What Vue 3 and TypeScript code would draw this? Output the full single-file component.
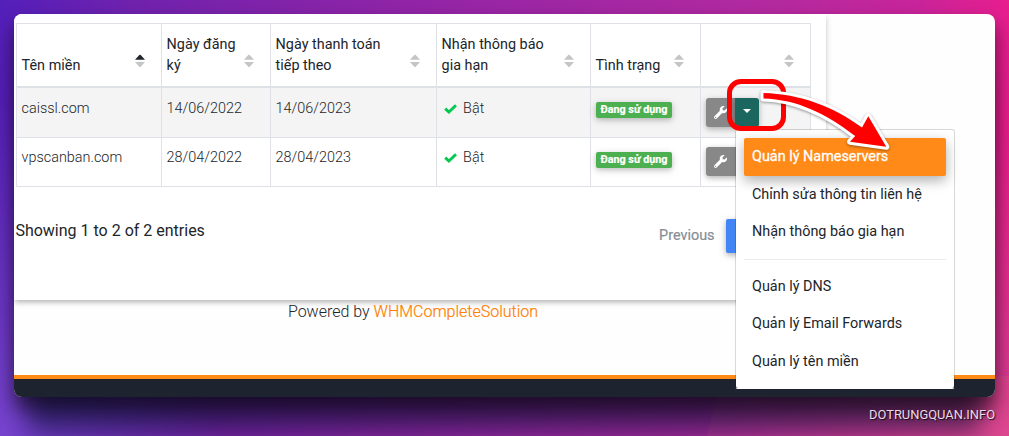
<script setup lang="ts">
interface Column {
  label: string
  sort: 'asc' | 'none'
}

interface Domain {
  name: string
  registered: string
  due: string
  open: boolean
}

const columns: Column[] = [
  { label: 'Tên miền', sort: 'asc' },
  { label: 'Ngày đăng ký', sort: 'none' },
  { label: 'Ngày thanh toán tiếp theo', sort: 'none' },
  { label: 'Nhận thông báo gia hạn', sort: 'none' },
  { label: 'Tình trạng', sort: 'none' },
  { label: '', sort: 'none' },
]

const domains: Domain[] = [
  { name: 'caissl.com', registered: '14/06/2022', due: '14/06/2023', open: true },
  { name: 'vpscanban.com', registered: '28/04/2022', due: '28/04/2023', open: false },
]

const menuGroups: string[][] = [
  ['Quản lý Nameservers', 'Chỉnh sửa thông tin liên hệ', 'Nhận thông báo gia hạn'],
  ['Quản lý DNS', 'Quản lý Email Forwards', 'Quản lý tên miền'],
]
const activeItem = menuGroups[0][0]
</script>

<template>
  <div class="backdrop">
    <div class="window">
      <main class="page">
        <section class="card">
          <table class="domains">
            <colgroup>
              <col class="c-name" /><col class="c-reg" /><col class="c-due" />
              <col class="c-notify" /><col class="c-status" /><col class="c-actions" />
            </colgroup>
            <thead>
              <tr>
                <th v-for="(column, i) in columns" :key="i">
                  <div class="head">
                    <span>{{ column.label }}</span>
                    <svg class="sort" :class="column.sort" width="10" height="14" viewBox="0 0 10 14">
                      <path class="up" d="M0 5.7 L4.3 1.1 Q5 .5 5.7 1.1 L10 5.7Z" />
                      <path class="down" d="M0 8 H10 L5.7 12.7 Q5 13.3 4.3 12.7Z" />
                    </svg>
                  </div>
                </th>
              </tr>
            </thead>
            <tbody>
              <tr v-for="domain in domains" :key="domain.name">
                <td>{{ domain.name }}</td>
                <td>{{ domain.registered }}</td>
                <td>{{ domain.due }}</td>
                <td>
                  <span class="notify">
                    <svg width="13" height="10" viewBox="0 0 13 10">
                      <path d="M1.2 4.6 L4.9 8 L12 1.2" fill="none" stroke="#05c851" stroke-width="2.9" />
                    </svg>
                    Bật
                  </span>
                </td>
                <td class="status"><span class="badge">Đang sử dụng</span></td>
                <td class="actions">
                  <div class="group">
                    <button class="tool" type="button">
                      <svg width="13" height="13" viewBox="0 0 512 512">
                        <path fill="#fff" d="M507.73 109.1c-2.24-9.03-13.54-12.09-20.12-5.51l-74.36 74.36-67.88-11.31-11.31-67.88 74.36-74.36c6.62-6.62 3.43-17.9-5.66-20.16-47.38-11.74-99.55.91-136.58 37.93-39.64 39.64-50.55 97.1-34.05 147.2L18.74 402.76c-24.99 24.99-24.99 65.51 0 90.5 24.99 24.99 65.51 24.99 90.5 0l213.21-213.21c50.12 16.71 107.47 5.68 147.37-34.22 37.07-37.07 49.7-89.32 37.91-136.73zM64 472c-13.25 0-24-10.75-24-24 0-13.26 10.75-24 24-24s24 10.74 24 24c0 13.25-10.75 24-24 24z" />
                      </svg>
                    </button>
                    <button v-if="domain.open" class="toggle" type="button"><i></i></button>
                  </div>
                </td>
              </tr>
            </tbody>
          </table>
          <div class="summary">
            <span class="entries">Showing 1 to 2 of 2 entries</span>
            <span class="previous">Previous</span>
            <span class="current"></span>
          </div>
        </section>
        <p class="powered">Powered by <a>WHMCompleteSolution</a></p>
      </main>
      <footer></footer>
    </div>

    <nav class="menu">
      <template v-for="(group, g) in menuGroups" :key="g">
        <hr v-if="g > 0" />
        <a v-for="item in group" :key="item" :class="{ active: item === activeItem }">{{ item }}</a>
      </template>
    </nav>

    <div class="ring"></div>
    <svg class="arrow" width="145" height="80" viewBox="755 80 145 80">
      <path d="M763.5 92.9 C800 94 833 106 862 127.6 L868.3 116.2 L886.3 146.8 L850 141.8 L855.2 136 C826 113.5 797 99.5 763.5 98.5Z" fill="#fff" stroke="#fff" stroke-width="6" stroke-linejoin="round" />
      <path d="M763.5 92.9 C800 94 833 106 862 127.6 L868.3 116.2 L886.3 146.8 L850 141.8 L855.2 136 C826 113.5 797 99.5 763.5 98.5Z" fill="#f00" />
    </svg>
    <div class="credit">DOTRUNGQUAN.INFO</div>
  </div>
</template>

<style>
html,
body {
  margin: 0;
  overflow: hidden;
}
</style>

<style scoped>
.backdrop {
  position: relative;
  box-sizing: border-box;
  width: 1009px;
  height: 436px;
  padding: 14px 14px 0;
  overflow: hidden;
  font-family: Roboto, "Noto Sans", sans-serif;
  color: #212529;
  background:
    linear-gradient(104deg, transparent 70.4%, rgba(255, 120, 120, 0.12) 70.6%) 0 100% / 100% 60px no-repeat,
    radial-gradient(ellipse 220px 340px at 0 100%, rgba(120, 70, 208, 0.95), transparent),
    radial-gradient(ellipse 280px 330px at 100% 105%, rgba(212, 72, 150, 0.9), transparent),
    linear-gradient(96deg, #541fbb 0%, #6f22ae 12%, #9325a7 40%, #b42aa0 73%, #c9249b 87%, #f01c8b 98%);
}

.window {
  height: 383px;
  display: flex;
  flex-direction: column;
  overflow: hidden;
  border-radius: 8px;
  background: #fefefe;
  box-shadow: 0 12px 20px rgba(0, 0, 0, 0.6), 0 50px 24px -14px rgba(15, 20, 60, 0.6);
}

.page {
  flex: 1;
}

.card {
  box-sizing: border-box;
  width: 812px;
  height: 286px;
  padding: 9px 15px 0 2px;
  background: #fff;
  box-shadow: 0 3px 5px -1px rgba(0, 0, 0, 0.24), 0 2px 8px rgba(0, 0, 0, 0.09);
}

.domains {
  width: 795px;
  table-layout: fixed;
  border-collapse: separate;
  border-spacing: 0;
  border: solid #dee2e6;
  border-width: 1px 0 0 1px;
  font-size: 14.4px;
}

.c-name { width: 145px; }
.c-reg { width: 109px; }
.c-due { width: 166px; }
.c-notify { width: 154px; }
.c-status { width: 110px; }
.c-actions { width: 110px; }

th,
td {
  box-sizing: border-box;
  padding: 0 0 0 4.6px;
  border-right: 1px solid #dee2e6;
  border-bottom: 1px solid #dee2e6;
  text-align: left;
}

th {
  height: 64px;
  border-bottom-width: 2px;
  font-size: 14.4px;
  font-weight: 400;
  line-height: 21px;
  vertical-align: bottom;
}

.head {
  display: flex;
  align-items: flex-end;
  justify-content: space-between;
  padding: 0 16px 10px 0;
}

.head span {
  max-width: 118px;
}

.sort {
  flex: none;
  margin-bottom: 8.5px;
  fill: #c5c5c5;
}

.sort.asc .up {
  fill: #212529;
}

td {
  height: 49px;
  padding-top: 10px;
  font-weight: 300;
  line-height: 22px;
  vertical-align: top;
}

tbody tr:first-child td {
  height: 50px;
  background: #f4f4f4;
}

tbody tr:last-child td {
  padding-top: 9px;
}

.notify {
  display: flex;
  align-items: center;
  gap: 6px;
  padding-left: 2.5px;
}

tbody tr .status,
tbody tr:last-child .status {
  padding-top: 14px;
  padding-left: 5px;
}

.badge {
  display: block;
  width: 76px;
  height: 16px;
  border-radius: 2px;
  background: #4caf50;
  color: #fff;
  font-size: 10.8px;
  font-weight: 700;
  -webkit-text-stroke: 0.2px #fff;
  line-height: 15px;
  text-align: center;
  white-space: nowrap;
  box-shadow: 0 2px 5px rgba(0, 0, 0, 0.16), 0 2px 10px rgba(0, 0, 0, 0.12);
}

tbody tr .actions {
  padding-top: 10px;
  padding-left: 5px;
}

tbody tr:last-child .actions {
  padding-top: 9px;
}

.group {
  display: flex;
}

button {
  display: flex;
  align-items: center;
  height: 29px;
  padding: 0;
  border: 0;
  border-radius: 3px;
  box-shadow: 0 2px 5px rgba(0, 0, 0, 0.2), 0 2px 8px rgba(0, 0, 0, 0.12);
}

.tool {
  width: 29px;
  padding-left: 8px;
  border-radius: 3px 0 0 3px;
  background: #888;
}

tbody tr:last-child .tool {
  width: 40px;
}

.toggle {
  width: 24px;
  justify-content: center;
  border-radius: 0 3px 3px 0;
  background: #1b665e;
}

.toggle i {
  margin-bottom: 3px;
  border: 4px solid transparent;
  border-top-color: #fff;
  border-bottom: 0;
}

.summary {
  display: flex;
  align-items: center;
  height: 34px;
  margin-top: 32px;
}

.entries {
  flex: 1;
  margin-left: -0.6px;
  padding-bottom: 11px;
  font-size: 16px;
}

.previous {
  margin-right: 11.5px;
  padding-bottom: 2px;
  color: #868e96;
  font-size: 14.4px;
  -webkit-text-stroke: 0.2px #868e96;
}

.current {
  width: 85px;
  height: 34px;
  border-radius: 2px;
  background: #4285f4;
  box-shadow: 0 2px 5px rgba(0, 0, 0, 0.2), 0 2px 10px rgba(0, 0, 0, 0.15);
}

.powered {
  margin: 0;
  width: 798px;
  font-size: 16px;
  font-weight: 300;
  line-height: 24px;
  text-align: center;
}

.powered a {
  color: #ff7f00;
  -webkit-text-stroke: 0.2px #ff7f00;
}

footer {
  height: 18px;
  border-top: 4px solid #ff8a17;
  background: #1d2430;
}

.menu {
  position: absolute;
  left: 735px;
  top: 129px;
  box-sizing: border-box;
  width: 220px;
  height: 260px;
  padding: 8px;
  border: 1px solid rgba(0, 0, 0, 0.15);
  border-bottom-color: #fff;
  border-radius: 3px;
  background: #fff;
  background-clip: padding-box;
}

.menu a {
  display: block;
  height: 37.5px;
  padding-left: 8px;
  font-size: 14.4px;
  line-height: 37px;
}

.menu .active {
  border-radius: 2px;
  background: #ff8a17;
  color: #fff;
  -webkit-text-stroke: 0.3px #fff;
  box-shadow: 0 5px 11px rgba(0, 0, 0, 0.18), 0 4px 15px rgba(0, 0, 0, 0.15);
}

.menu hr {
  height: 1px;
  margin: 8px 0;
  border: 0;
  background: #e9ecef;
}

.ring {
  position: absolute;
  left: 727px;
  top: 79px;
  box-sizing: border-box;
  width: 59px;
  height: 52px;
  border: 5px solid #f00;
  border-radius: 14px;
}

.arrow {
  position: absolute;
  left: 755px;
  top: 80px;
  filter: drop-shadow(0 1px 1.5px rgba(0, 0, 0, 0.4));
}

.credit {
  position: relative;
  margin-top: 9px;
  color: #eadbe8;
  font-size: 12.9px;
  line-height: 17px;
  text-align: right;
  text-shadow: 1px 1px 1px rgba(0, 0, 0, 0.8);
}
</style>
